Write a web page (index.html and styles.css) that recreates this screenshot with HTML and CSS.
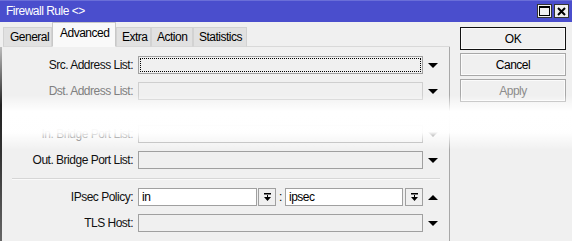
FILE: index.html
```html
<!DOCTYPE html>
<html lang="en">
<head>
    <meta charset="UTF-8">
    <title>Firewall Rule</title>
    <link rel="stylesheet" href="styles.css">
</head>
<body>
    <div class="window">
        <div class="titlebar">
            <span class="title">Firewall Rule &lt;&gt;</span>
            <div class="winbtns">
                <span class="winbtn">
                    <svg width="11" height="10" viewBox="0 0 11 10"><rect x="0.5" y="0.5" width="10" height="9" fill="none" stroke="#000"/><rect x="0" y="0" width="11" height="2" fill="#000"/></svg>
                </span>
                <span class="winbtn">
                    <svg width="9" height="9" viewBox="0 0 9 9"><path d="M1 1 L8 8 M8 1 L1 8" stroke="#000" stroke-width="2"/></svg>
                </span>
            </div>
        </div>

        <div class="main">
            <div class="left">
                <div class="tabs">
                    <div class="tab">General</div>
                    <div class="tab active">Advanced</div>
                    <div class="tab">Extra</div>
                    <div class="tab">Action</div>
                    <div class="tab">Statistics</div>
                    <div class="tab-rest"></div>
                </div>

                <div class="panel">
                    <div class="row first">
                        <label>Src. Address List:</label>
                        <div class="field focus"><span class="dots"></span></div>
                        <span class="arrow down"></span>
                    </div>
                    <div class="row">
                        <label class="dim">Dst. Address List:</label>
                        <div class="field disabled"></div>
                        <span class="arrow down"></span>
                    </div>
                    <div class="row gap-big">
                        <label>In. Bridge Port List:</label>
                        <div class="field"></div>
                        <span class="arrow down"></span>
                    </div>
                    <div class="row">
                        <label>Out. Bridge Port List:</label>
                        <div class="field"></div>
                        <span class="arrow down"></span>
                    </div>

                    <div class="sep"></div>

                    <div class="row">
                        <label>IPsec Policy:</label>
                        <div class="pair">
                            <div class="field white small-a">in</div>
                            <span class="pick">
                                <svg width="9" height="9" viewBox="0 0 9 9"><rect x="1" y="0" width="7" height="1.5" fill="#000"/><rect x="4" y="2" width="1" height="2" fill="#000"/><path d="M1 4 H8 L4.5 8 Z" fill="#000"/></svg>
                            </span>
                            <span class="colon">:</span>
                            <div class="field white small-b">ipsec</div>
                            <span class="pick">
                                <svg width="9" height="9" viewBox="0 0 9 9"><rect x="1" y="0" width="7" height="1.5" fill="#000"/><rect x="4" y="2" width="1" height="2" fill="#000"/><path d="M1 4 H8 L4.5 8 Z" fill="#000"/></svg>
                            </span>
                        </div>
                        <span class="arrow up"></span>
                    </div>
                    <div class="row">
                        <label>TLS Host:</label>
                        <div class="field"></div>
                        <span class="arrow down"></span>
                    </div>

                    <div class="sep bottom"></div>
                </div>
            </div>

            <div class="side">
                <button class="btn default">OK</button>
                <button class="btn">Cancel</button>
                <button class="btn off">Apply</button>
            </div>
        </div>

        <div class="fade"></div>
        <div class="edge"></div>
    </div>
</body>
</html>
```

FILE: styles.css
```css
* {
    margin: 0;
    padding: 0;
    box-sizing: border-box;
}

body {
    background-color: #f0f0f0;
    font-family: "Liberation Sans", Arial, sans-serif;
    font-size: 12px;
    letter-spacing: -0.5px;
    color: #000;
    overflow: hidden;
}

.window {
    position: relative;
    width: 572px;
    height: 241px;
}

.titlebar {
    height: 22px;
    background-color: #4a4ecd;
    border-top: 1px solid #6a6ed8;
    display: flex;
    align-items: center;
    justify-content: space-between;
    padding: 0 3px 0 6px;
}

.title {
    color: #fff;
    font-size: 12px;
    margin-top: -1px;
}

.winbtns {
    display: flex;
    gap: 2px;
    margin-top: -1px;
}

.winbtn {
    width: 15px;
    height: 14px;
    background-color: #f0f0f0;
    border: 1px solid #333;
    display: flex;
    align-items: center;
    justify-content: center;
}

.main {
    display: flex;
}

.left {
    width: 450px;
    padding-left: 3px;
}

/* tabs */
.tabs {
    height: 25px;
    display: flex;
    align-items: flex-end;
}

.tab {
    height: 20px;
    padding: 0 6px;
    background-color: #e1e1e1;
    border: 1px solid #d2d2d2;
    border-bottom: 1px solid #d9d9d9;
    line-height: 18px;
    color: #000;
}

.tab:first-child {
    width: 49px;
    padding-left: 6px;
}

.tab.active {
    height: 25px;
    width: 64px;
    background-color: #f9f9f9;
    border-color: #c8c8c8;
    border-bottom: 1px solid #f9f9f9;
    padding: 0 7px;
    line-height: 21px;
}

.tab:nth-child(3) { width: 35px; padding-left: 5px; }
.tab:nth-child(4) { width: 42px; padding-left: 5px; }
.tab:nth-child(5) { width: 54px; padding-left: 5px; }

.tab-rest {
    flex: 1;
    border-bottom: 1px solid #d9d9d9;
}

/* panel */
.panel {
    height: 194px;
    border-right: 1px solid #a8a8a8;
    padding-top: 9px;
    display: flex;
    flex-direction: column;
    gap: 8px;
}

.row {
    display: grid;
    grid-template-columns: 130px 285px 10px;
    column-gap: 5px;
    height: 18px;
    align-items: center;
}

.row.gap-big {
    margin-top: 17px;
}

.row label {
    text-align: right;
    color: #111;
}

.row label.dim {
    color: #808080;
}

.field {
    height: 18px;
    border: 1px solid #a0a0a0;
    background-color: #f0f0f0;
    padding: 1px 3px;
    line-height: 14px;
}

.field.disabled {
    border-color: #cfcfcf;
}

.field.focus {
    padding: 1px;
}

.dots {
    display: block;
    height: 100%;
    border: 1px dotted #000;
}

.field.white {
    background-color: #fff;
}

.pair {
    display: flex;
    align-items: center;
    height: 18px;
}

.small-a {
    width: 119px;
}

.small-b {
    width: 118px;
}

.pick {
    width: 18px;
    height: 18px;
    margin-left: 1px;
    border: 1px solid #a0a0a0;
    background-color: #f0f0f0;
    display: flex;
    align-items: center;
    justify-content: center;
}

.colon {
    width: 9px;
    text-align: center;
}

.pair .pick:last-child {
    margin-left: 2px;
}

.arrow {
    justify-self: center;
    width: 0;
    height: 0;
    border-left: 5px solid transparent;
    border-right: 5px solid transparent;
}

.arrow.down {
    border-top: 5px solid #000;
}

.arrow.up {
    border-bottom: 5px solid #000;
}

.sep {
    margin: 1px 9px 0 9px;
    height: 2px;
    border-top: 1px solid #d6d6d6;
    border-bottom: 1px solid #fafafa;
}

.sep.bottom {
    margin-top: 1px;
}

/* buttons */
.side {
    padding: 5px 0 0 10px;
    display: flex;
    flex-direction: column;
    gap: 3px;
}

.btn {
    width: 106px;
    height: 23px;
    font-family: inherit;
    font-size: 12px;
    letter-spacing: -0.5px;
    background-color: #f0f0f0;
    border: 1px solid #a8a8a8;
    box-shadow: inset 0 0 0 1px #fbfbfb;
    color: #000;
}

.btn.default {
    border: 1px solid #111;
}

.btn.off {
    color: #8c8c8c;
}

/* faded strip over the middle of the form */
.fade {
    position: absolute;
    left: 0;
    right: 0;
    top: 95px;
    height: 55px;
    background: linear-gradient(to bottom, rgba(255,255,255,0) 0%, #fff 30%, rgba(255,255,255,0.97) 68%, rgba(255,255,255,0) 100%);
}

.edge {
    position: absolute;
    left: 0;
    top: 47px;
    bottom: 0;
    width: 2px;
    background: linear-gradient(to bottom, #bdbdbd 0%, #222 30%, #333 55%, #666 100%);
}
```
